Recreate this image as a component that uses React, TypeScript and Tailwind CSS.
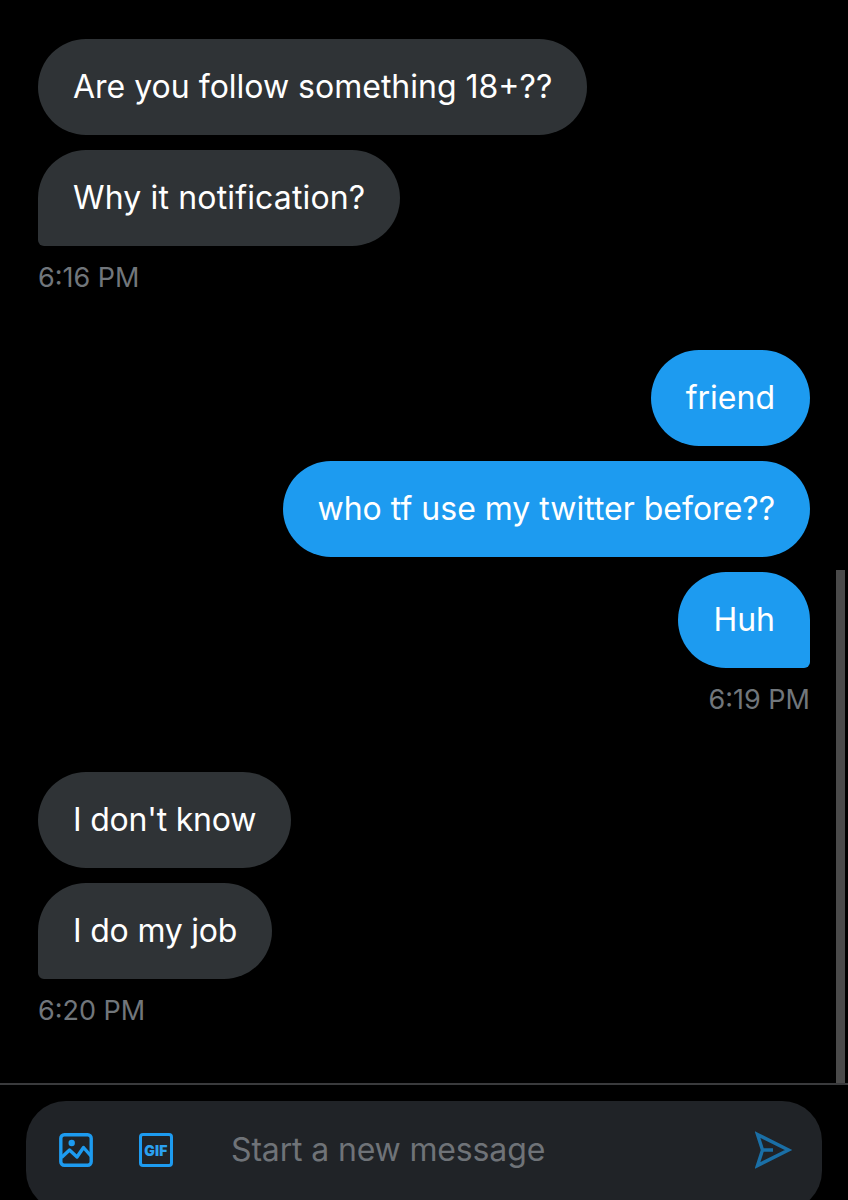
function Bubble({ text, mine, last, fit }: { text: string; mine?: boolean; last?: boolean; fit?: string }) {
  const corner = last ? (mine ? "rounded-br-[6px]" : "rounded-bl-[6px]") : "";
  return (
    <div
      className={`h-[96px] px-[35px] flex items-center rounded-[48px] text-[32px] text-white ${corner} ${fit ?? ""} ${mine ? "self-end bg-[#1d9bf0]" : "self-start bg-[#2f3336]"}`}
    >
      {text}
    </div>
  );
}

function Time({ text, mine }: { text: string; mine?: boolean }) {
  return (
    <div className={`h-[32px] pt-[1px] leading-[32px] text-[27px] text-[#71767b] ${mine ? "self-end" : "self-start"}`}>
      {text}
    </div>
  );
}

type Item = { text: string; fit?: string };

function Group({ items, time, mine }: { items: Item[]; time: string; mine?: boolean }) {
  return (
    <div className="flex flex-col gap-[15px]">
      {items.map((m, i) => (
        <Bubble key={m.text} text={m.text} fit={m.fit} mine={mine} last={i === items.length - 1} />
      ))}
      <Time text={time} mine={mine} />
    </div>
  );
}

export default function App() {
  return (
    <div
      className="relative w-[848px] h-[1200px] bg-black overflow-hidden flex flex-col"
      style={{ fontFamily: 'Inter, "Liberation Sans", sans-serif' }}
    >
      <div className="h-[1083px] shrink-0 pt-[39px] px-[38px] flex flex-col gap-[57px]">
        <Group
          items={[
            { text: "Are you follow something 18+??" },
            { text: "Why it notification?", fit: "tracking-[0.15px]" },
          ]}
          time="6:16 PM"
        />
        <Group
          items={[{ text: "friend" }, { text: "who tf use my twitter before??" }, { text: "Huh" }]}
          time="6:19 PM"
          mine
        />
        <Group
          items={[
            { text: "I don't know", fit: "tracking-[-0.2px]" },
            { text: "I do my job", fit: "tracking-[-0.2px]" },
          ]}
          time="6:20 PM"
        />
      </div>
      <div className="absolute left-[836px] top-[570px] w-[9px] h-[513px] bg-[#4a4a4a]" />
      <div className="h-[2px] shrink-0 bg-[#3a3b3d]" />
      <div className="mt-[16px] mx-[26px] h-[110px] shrink-0 rounded-[40px] bg-[#202327] flex items-center pl-[33px] pr-[29px] pb-[12px]">
        <svg width="34" height="34" viewBox="0 0 34 34" fill="none" className="shrink-0">
          <rect x="1.8" y="1.8" width="30.4" height="30.4" rx="3.5" stroke="#1d9bf0" strokeWidth="3.4" />
          <circle cx="12.7" cy="10" r="3.2" fill="#1d9bf0" />
          <path d="M2.5 24.5 L10.5 17 L18 24 L24.5 14.5 L32 23" stroke="#1d9bf0" strokeWidth="3.4" strokeLinejoin="round" />
        </svg>
        <div className="ml-[46px] w-[34px] h-[34px] shrink-0 rounded-[4px] border-[3.4px] border-[#1d9bf0] flex items-center justify-center text-[14px] font-black tracking-[0.2px] text-[#2ba0f0]">
          GIF
        </div>
        <div className="ml-[58px] flex-1 text-[32px] tracking-[-0.15px] text-[#6f7378]">Start a new message</div>
        <svg width="38" height="38" viewBox="0 0 38 38" fill="none" className="shrink-0">
          <path d="M2.5 3.5 L33.5 19 L2.5 34.5 L7.5 19 Z M7.5 19 H18" stroke="#1a6fa6" strokeWidth="3.4" strokeLinejoin="miter" />
        </svg>
      </div>
    </div>
  );
}
